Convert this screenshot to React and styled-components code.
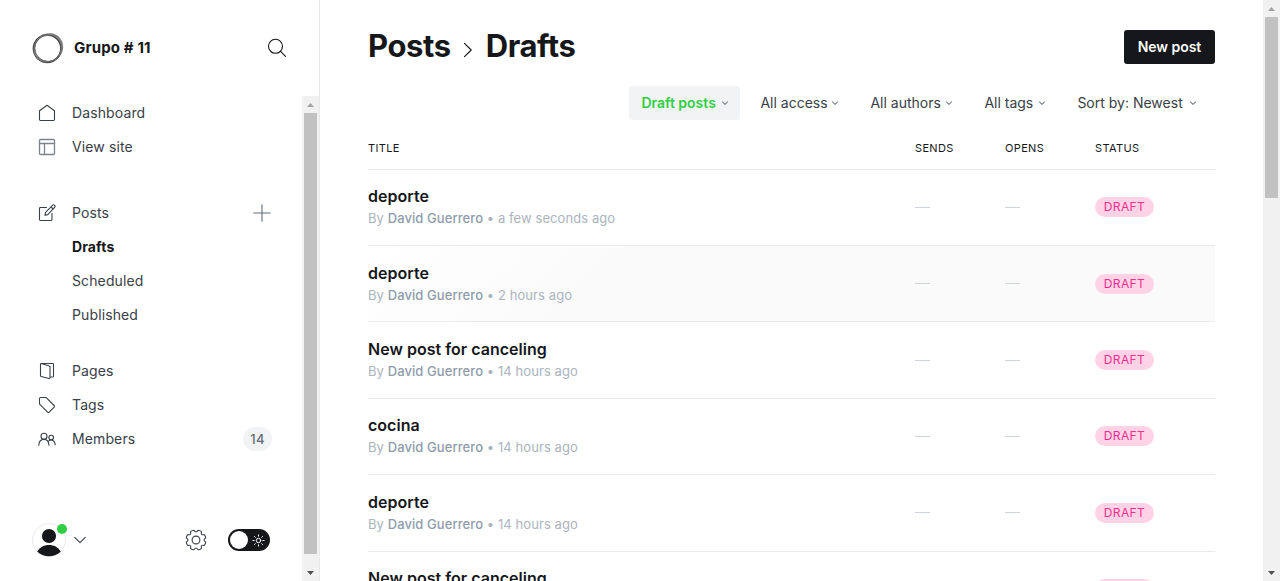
import React from "react";
import styled, { createGlobalStyle, css } from "styled-components";

const GlobalStyle = createGlobalStyle`
  *, *::before, *::after { box-sizing: border-box; }
  html, body { margin: 0; height: 100%; overflow: hidden; }
  body {
    font-family: Inter, "Liberation Sans", sans-serif;
    font-size: 14px;
    color: #15171a;
    background: #fff;
  }
  h1, h3, p { margin: 0; }
  button { font: inherit; border: 0; background: none; padding: 0; }
`;

const Shell = styled.div`
  display: flex;
  width: 100vw;
  height: 100vh;
  overflow: hidden;
`;

const Sidebar = styled.aside`
  display: flex;
  flex-direction: column;
  flex: 0 0 320px;
  border-right: 1px solid #e6e9eb;
`;

const SidebarHeader = styled.header`
  display: flex;
  align-items: center;
  height: 96px;
  padding: 0 32px;
`;

const SiteName = styled.div`
  flex: 1;
  margin-left: 10px;
  padding-bottom: 1px;
  font-size: 15px;
  font-weight: 700;
  letter-spacing: 0.15px;
`;

const SidebarBody = styled.div`
  display: flex;
  flex: 1;
  min-height: 0;
`;

const NavColumn = styled.div`
  display: flex;
  flex-direction: column;
  flex: 1;
`;

const NavGroup = styled.nav`
  display: flex;
  flex-direction: column;
  margin-bottom: ${(p) => p.$space}px;
`;

const NavItem = styled.div`
  display: flex;
  align-items: center;
  height: 34px;
  padding: 0 31px 0 ${(p) => (p.$nested ? 72 : 38)}px;
  color: #394047;
  font-size: 14px;
  font-weight: ${(p) => (p.$active ? 700 : 400)};
  letter-spacing: 0.12px;
  ${(p) => p.$active && css`color: #15171a;`}
`;

const NavLabel = styled.span`
  flex: 1;
  padding-bottom: 2px;
  margin-left: ${(p) => (p.$nested ? 0 : 16)}px;
`;

const CountBadge = styled.span`
  display: grid;
  place-items: center;
  width: 29px;
  height: 24px;
  margin-right: -1px;
  padding-bottom: 1px;
  border-radius: 12px;
  background: #f1f3f4;
  color: #626d79;
  font-size: 13px;
  font-weight: 500;
  letter-spacing: 0.3px;
`;

const SidebarFooter = styled.footer`
  display: flex;
  align-items: center;
  height: 34px;
  margin-top: auto;
  margin-bottom: 24px;
  padding: 0 32px;
`;

const Avatar = styled.div`
  position: relative;
  width: 34px;
  height: 34px;
  margin-right: 8px;
`;

const OnlineDot = styled.span`
  position: absolute;
  top: 1px;
  right: -1px;
  width: 10px;
  height: 10px;
  border-radius: 50%;
  background: #30cf43;
`;

const FooterTools = styled.div`
  display: flex;
  align-items: center;
  gap: 21px;
  margin-left: auto;
`;

const Toggle = styled.button`
  display: flex;
  align-items: center;
  justify-content: space-between;
  width: 42px;
  height: 22px;
  padding: 0 5px 0 2px;
  border-radius: 11px;
  background: #15171a;
`;

const ToggleKnob = styled.span`
  width: 18px;
  height: 18px;
  border-radius: 50%;
  background: #fff;
`;

const ScrollTrack = styled.div`
  display: flex;
  flex-direction: column;
  align-items: center;
  flex: 0 0 17px;
  background: #f1f1f1;
`;

const ScrollArrow = styled.span`
  display: grid;
  place-items: center;
  width: 17px;
  height: 17px;
  flex: none;
`;

const ScrollThumb = styled.span`
  width: 13px;
  height: ${(p) => p.$length}px;
  margin-bottom: auto;
  background: #c1c1c1;
`;

const Main = styled.main`
  flex: 1;
  min-width: 0;
  padding: 0 48px;
  overflow: hidden;
`;

const TitleBar = styled.header`
  display: flex;
  align-items: center;
  justify-content: space-between;
  height: 64px;
  padding-top: 30px;
`;

const Crumbs = styled.h1`
  display: flex;
  align-items: center;
  height: 34px;
  font-size: 31px;
  line-height: 34px;
  font-weight: 700;
  letter-spacing: -0.4px;
  svg { margin: 6px 13px 0 12px; }
  span { margin-top: -2px; }
`;

const PrimaryButton = styled.button`
  width: 91px;
  height: 34px;
  padding-bottom: 2px;
  border-radius: 3px;
  background: #15171a;
  color: #fff;
  font-size: 14px;
  font-weight: 600;
  letter-spacing: -0.05px;
`;

const Filters = styled.div`
  display: flex;
  justify-content: flex-end;
  gap: 8px;
  margin: 22px 7px 0 0;
`;

const Filter = styled.button`
  display: flex;
  align-items: center;
  justify-content: space-between;
  width: ${(p) => p.$width}px;
  height: 34px;
  padding: 0 11px 0 12.4px;
  border-radius: 3px;
  color: #394047;
  font-size: 14px;
  white-space: nowrap;
  ${(p) =>
    p.$active &&
    css`
      background: #f1f3f4;
      color: #30cf43;
      font-weight: 600;
    `}
  span { padding-bottom: 2px; }
`;

const Table = styled.section`
  margin-top: 6px;
`;

const columns = css`
  display: grid;
  grid-template-columns: 547px 90px 90px 120px;
`;

const TableHead = styled.div`
  ${columns}
  align-items: center;
  height: 42.6px;
  padding-top: 1px;
  font-size: 11px;
  font-weight: 400;
  letter-spacing: 0.35px;
  text-transform: uppercase;
`;

const Row = styled.article`
  ${columns}
  height: 76.4px;
  border-top: 1px solid #e9ebed;
  background: ${(p) =>
    p.$hovered ? "linear-gradient(135deg, #fff 0%, #fafafa 30%, #fafafa 100%)" : "#fff"};
`;

const Post = styled.div`
  padding-top: 15.6px;
`;

const PostTitle = styled.h3`
  font-size: 16px;
  line-height: 22px;
  font-weight: 600;
  letter-spacing: 0.02px;
`;

const PostMeta = styled.p`
  font-size: 13px;
  line-height: 22px;
  color: #abb4be;
  letter-spacing: 0.08px;
  strong { font-weight: 500; color: #8e9cac; }
`;

const Metric = styled.div`
  display: flex;
  align-items: center;
  color: #ced4d9;
  &::before {
    content: "";
    width: 15px;
    height: 1px;
    background: #ced4d9;
  }
`;

const Status = styled.div`
  display: flex;
  align-items: center;
`;

const StatusPill = styled.span`
  display: grid;
  place-items: center;
  width: 59px;
  height: 20px;
  padding-bottom: 1px;
  border-radius: 10px;
  background: #ffd3e6;
  color: #fb2d8d;
  font-size: 12px;
  letter-spacing: 0.4px;
`;

const IconSvg = styled.svg`
  flex: none;
`;

const Icon = ({ size = 18, width = 1.1, box = 18, color = "#394047", children }) => (
  <IconSvg
    width={size}
    height={size}
    viewBox={`0 0 ${box} ${box}`}
    fill="none"
    stroke={color}
    strokeWidth={width}
    strokeLinecap="round"
    strokeLinejoin="round"
  >
    {children}
  </IconSvg>
);

const Logo = () => (
  <Icon size={32} box={32} width={1} color="#444">
    <path
      d="M18.500 1.600C24.500 1.300 30.600 6.500 30.800 13.500c.2 6-2.500 11-6.500 13.800 3.200-3.600 5-8 4.600-13C28.500 8.500 25 3.500 18.500 1.600z"
      fill="#9a9a9a"
      stroke="#888"
      strokeWidth="0.5"
    />
    <circle cx="15.2" cy="16.600" r="13.8" strokeWidth="1.500" />
    <circle cx="16.500" cy="15.700" r="14" stroke="#777" />
    <ellipse cx="15.600" cy="16" rx="14.300" ry="13" transform="rotate(-48 16 16)" stroke="#777" />
    <circle cx="15.800" cy="16.400" r="13" stroke="#555" strokeWidth="0.7" />
  </Icon>
);

const HomeIcon = () => (
  <Icon>
    <path d="M1.500 6.800 9 1.200l7.500 5.600v8.800a.9.9 0 0 1-.9.9H2.400a.9.9 0 0 1-.9-.9z" />
  </Icon>
);
const SiteIcon = () => (
  <Icon color="#7b848d" width={1.3}>
    <rect x="1.500" y="1.500" width="15" height="15" rx="1" />
    <path d="M1.500 5.500h15M6.500 5.500v11" />
  </Icon>
);
const PostsIcon = () => (
  <Icon>
    <path d="M8.500 3.500H2.400a.9.9 0 0 0-.9.9v11.200c0 .5.4.9.9.9h10.700c.5 0 .9-.4.9-.9V9.500M14.500 1.300a1.400 1.400 0 0 1 2.100 2.100l-6.800 7.200-2.900.7.700-2.900zM13 2.900l2.100 2.100" />
  </Icon>
);
const PagesIcon = () => (
  <Icon>
    <path d="M3.200 1.500h11.500c.4 0 .8.3.8.8v11.900c0 .5-.4.8-.8.8H13M3.200 1.500c-.4 0-.7.3-.7.700v11.500c0 .4.2.7.600.8l7.900 2c.6.1 1-.3 1-.8V4.800c0-.4-.2-.7-.600-.8L3.200 1.500z" />
  </Icon>
);
const TagIcon = () => (
  <Icon>
    <path d="M1.500 2.600c0-.6.5-1.100 1.100-1.100h5.100c.3 0 .6.1.8.3l7.600 7.700c.5.5.5 1.200 0 1.600l-4.900 5c-.5.5-1.200.5-1.600 0L1.800 8.300a1 1 0 0 1-.3-.8z" />
  </Icon>
);
const MembersIcon = () => (
  <Icon>
    <circle cx="6" cy="6.300" r="3" />
    <circle cx="13.200" cy="7.500" r="2.300" />
    <path d="M.8 15.200c.2-3.500 2.400-5.800 5.200-5.800 2.500 0 4.700 2.300 5 5.800M10.800 10.900c3-2.200 6.200 0 6.400 3.800" />
  </Icon>
);
const SearchIcon = () => (
  <Icon size={20} box={20} color="#15171a">
    <circle cx="8.500" cy="8.300" r="7" />
    <path d="m13.600 13.400 4.900 4.900" />
  </Icon>
);
const PlusIcon = () => (
  <Icon color="#626d79">
    <path d="M9 .8v16.400M.8 9h16.400" />
  </Icon>
);
const FilterChevron = () => (
  <Icon size={8} box={8} color="#7c8691">
    <path d="M1.500 2.900 4 5.400l2.500-2.500" />
  </Icon>
);
const AccountChevron = () => (
  <Icon size={12} box={12}>
    <path d="M.7 3.300 6 8.600l5.300-5.300" />
  </Icon>
);

const gearPath = () => {
  const teeth = 8;
  let d = "";
  for (let i = 0; i < teeth; i++) {
    const a = ((i + 0.5) * 2 * Math.PI) / teeth - Math.PI / 2;
    const pt = (r, o) =>
      `${(11 + r * Math.cos(a + o)).toFixed(2)} ${(11 + r * Math.sin(a + o)).toFixed(2)}`;
    d += `${i ? "L" : "M"}${pt(9.9, -0.19)}Q${pt(10.5, 0)} ${pt(9.9, 0.19)}Q${pt(6.3, 0.39)} ${pt(9.9, 0.595)}`;
  }
  return d + "Z";
};
const GearIcon = () => (
  <Icon size={22} box={22}>
    <path d={gearPath()} />
    <circle cx="11" cy="11" r="3.900" />
  </Icon>
);
const SunIcon = () => (
  <Icon size={13} box={13} color="#fff" width={1}>
    <circle cx="6.500" cy="6.500" r="2.200" />
    <path d="M6.500.9v1.300M6.500 10.800v1.300M.9 6.500h1.300M10.800 6.500h1.300M2.500 2.500l.8.8M9.700 9.700l.8.8M10.500 2.500l-.8.8M3.300 9.700l-.8.8" />
  </Icon>
);
const Person = () => (
  <svg width="34" height="34" viewBox="0 0 34 34">
    <circle cx="17" cy="17" r="16.500" fill="#fff" stroke="#e9ebed" />
    <circle cx="17" cy="13" r="7.100" fill="#15171a" />
    <path d="M5.200 28.500C8.200 24 12 22 17 22s8.800 2 11.800 6.500C26 31.700 21.500 33.300 17 33.300S8 31.700 5.200 28.500z" fill="#15171a" />
  </svg>
);

const Scrollbar = ({ length }) => (
  <ScrollTrack>
    <ScrollArrow>
      <svg width="7" height="4" viewBox="0 0 7 4">
        <path d="M0 4 3.500 0 7 4z" fill="#a3a3a3" />
      </svg>
    </ScrollArrow>
    <ScrollThumb $length={length} />
    <ScrollArrow>
      <svg width="7" height="4" viewBox="0 0 7 4">
        <path d="M0 0h7L3.500 4z" fill="#505050" />
      </svg>
    </ScrollArrow>
  </ScrollTrack>
);

const NavLink = ({ icon, label, nested, active, children }) => (
  <NavItem $nested={nested} $active={active}>
    {icon}
    <NavLabel $nested={nested}>{label}</NavLabel>
    {children}
  </NavItem>
);

const filters = [
  { label: "Draft posts", width: 111, active: true },
  { label: "All access", width: 102 },
  { label: "All authors", width: 106 },
  { label: "All tags", width: 85 },
  { label: "Sort by: Newest", width: 143 },
];

const posts = [
  { title: "deporte", time: "a few seconds ago" },
  { title: "deporte", time: "2 hours ago", hovered: true },
  { title: "New post for canceling", time: "14 hours ago" },
  { title: "cocina", time: "14 hours ago" },
  { title: "deporte", time: "14 hours ago" },
  { title: "New post for canceling", time: "14 hours ago" },
];

export default function App() {
  return (
    <>
      <GlobalStyle />
      <Shell>
        <Sidebar>
          <SidebarHeader>
            <Logo />
            <SiteName>Grupo # 11</SiteName>
            <SearchIcon />
          </SidebarHeader>
          <SidebarBody>
            <NavColumn>
              <NavGroup $space={32}>
                <NavLink icon={<HomeIcon />} label="Dashboard" />
                <NavLink icon={<SiteIcon />} label="View site" />
              </NavGroup>
              <NavGroup $space={22}>
                <NavLink icon={<PostsIcon />} label="Posts">
                  <PlusIcon />
                </NavLink>
                <NavLink label="Drafts" nested active />
                <NavLink label="Scheduled" nested />
                <NavLink label="Published" nested />
              </NavGroup>
              <NavGroup $space={0}>
                <NavLink icon={<PagesIcon />} label="Pages" />
                <NavLink icon={<TagIcon />} label="Tags" />
                <NavLink icon={<MembersIcon />} label="Members">
                  <CountBadge>14</CountBadge>
                </NavLink>
              </NavGroup>
              <SidebarFooter>
                <Avatar>
                  <Person />
                  <OnlineDot />
                </Avatar>
                <AccountChevron />
                <FooterTools>
                  <GearIcon />
                  <Toggle>
                    <ToggleKnob />
                    <SunIcon />
                  </Toggle>
                </FooterTools>
              </SidebarFooter>
            </NavColumn>
            <Scrollbar length={441} />
          </SidebarBody>
        </Sidebar>
        <Main>
          <TitleBar>
            <Crumbs>
              <span>Posts</span>
              <svg width="10" height="16" viewBox="0 0 10 16" fill="none" stroke="#15171a" strokeWidth="1.100" strokeLinecap="round" strokeLinejoin="round">
                <path d="m1.500 1.300 6.700 6.700-6.700 6.700" />
              </svg>
              <span>Drafts</span>
            </Crumbs>
            <PrimaryButton>New post</PrimaryButton>
          </TitleBar>
          <Filters>
            {filters.map((f) => (
              <Filter key={f.label} $width={f.width} $active={f.active}>
                <span>{f.label}</span>
                <FilterChevron />
              </Filter>
            ))}
          </Filters>
          <Table>
            <TableHead>
              <span>Title</span>
              <span>Sends</span>
              <span>Opens</span>
              <span>Status</span>
            </TableHead>
            {posts.map((post, i) => (
              <Row key={i} $hovered={post.hovered}>
                <Post>
                  <PostTitle>{post.title}</PostTitle>
                  <PostMeta>
                    By <strong>David Guerrero</strong> • {post.time}
                  </PostMeta>
                </Post>
                <Metric />
                <Metric />
                <Status>
                  <StatusPill>DRAFT</StatusPill>
                </Status>
              </Row>
            ))}
          </Table>
        </Main>
        <Scrollbar length={181} />
      </Shell>
    </>
  );
}
